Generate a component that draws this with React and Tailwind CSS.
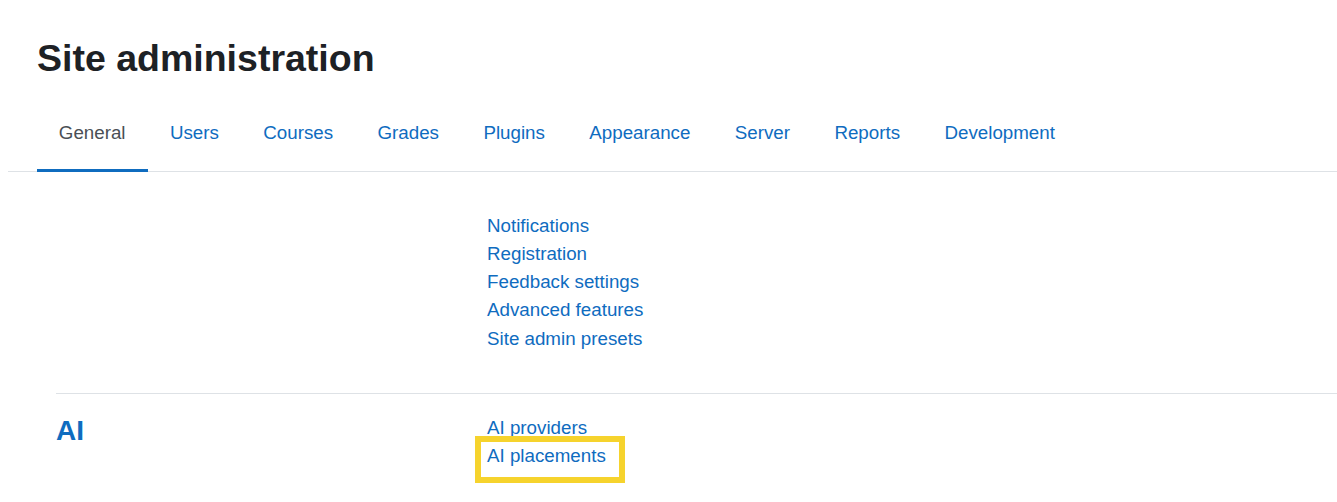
const TABS = ['General', 'Users', 'Courses', 'Grades', 'Plugins', 'Appearance', 'Server', 'Reports', 'Development'];

const GENERAL_LINKS = ['Notifications', 'Registration', 'Feedback settings', 'Advanced features', 'Site admin presets'];

const AdminLink = ({ label, highlight }) => (
  <li className="relative leading-[28.125px]">
    {highlight && (
      <span className="absolute left-[-12px] top-[-6px] w-[150px] h-[47px] border-[6px] border-[#f6d32d] pointer-events-none" />
    )}
    <a href="#" className="relative text-[#0f6cbf]">{label}</a>
  </li>
);

export default function App() {
  return (
    <div className="min-h-[502px] bg-white pl-[8px] text-[18.75px] text-[#1d2125]" style={{ fontFamily: '"Liberation Sans", Arial, sans-serif' }}>
      <h2 className="pl-[29px] pt-[36px] text-[37.5px] leading-[45px] font-bold text-[#1d2125]">Site administration</h2>

      {/* Tabs */}
      <ul className="mt-[20px] flex pl-[29px] border-b border-[#dee2e6]">
        {TABS.map((t, i) => (
          <li key={t} className="-mb-px">
            <a
              href="#"
              className={
                'block pl-[21.8px] pr-[22.6px] pt-[18px] pb-[22px] leading-[28px] border-b-[3px] ' +
                (i === 0 ? 'border-[#0f6cbf] text-[#4a4f55]' : 'border-transparent text-[#0f6cbf]')
              }
            >
              {t}
            </a>
          </li>
        ))}
      </ul>

      <div className="pl-[48px]">
        {/* General */}
        <div className="flex pt-[40px] pb-[40px]">
          <div className="w-[431px] shrink-0" />
          <ul>
            {GENERAL_LINKS.map((l) => (
              <AdminLink key={l} label={l} />
            ))}
          </ul>
        </div>

        {/* AI */}
        <div className="flex border-t border-[#dee2e6] pt-[20px]">
          <div className="w-[431px] shrink-0">
            <h3 className="text-[28px] leading-[33.6px] font-bold text-[#0f6cbf]">AI</h3>
          </div>
          <ul>
            <AdminLink label="AI providers" />
            <AdminLink label="AI placements" highlight />
          </ul>
        </div>
      </div>
    </div>
  );
}
